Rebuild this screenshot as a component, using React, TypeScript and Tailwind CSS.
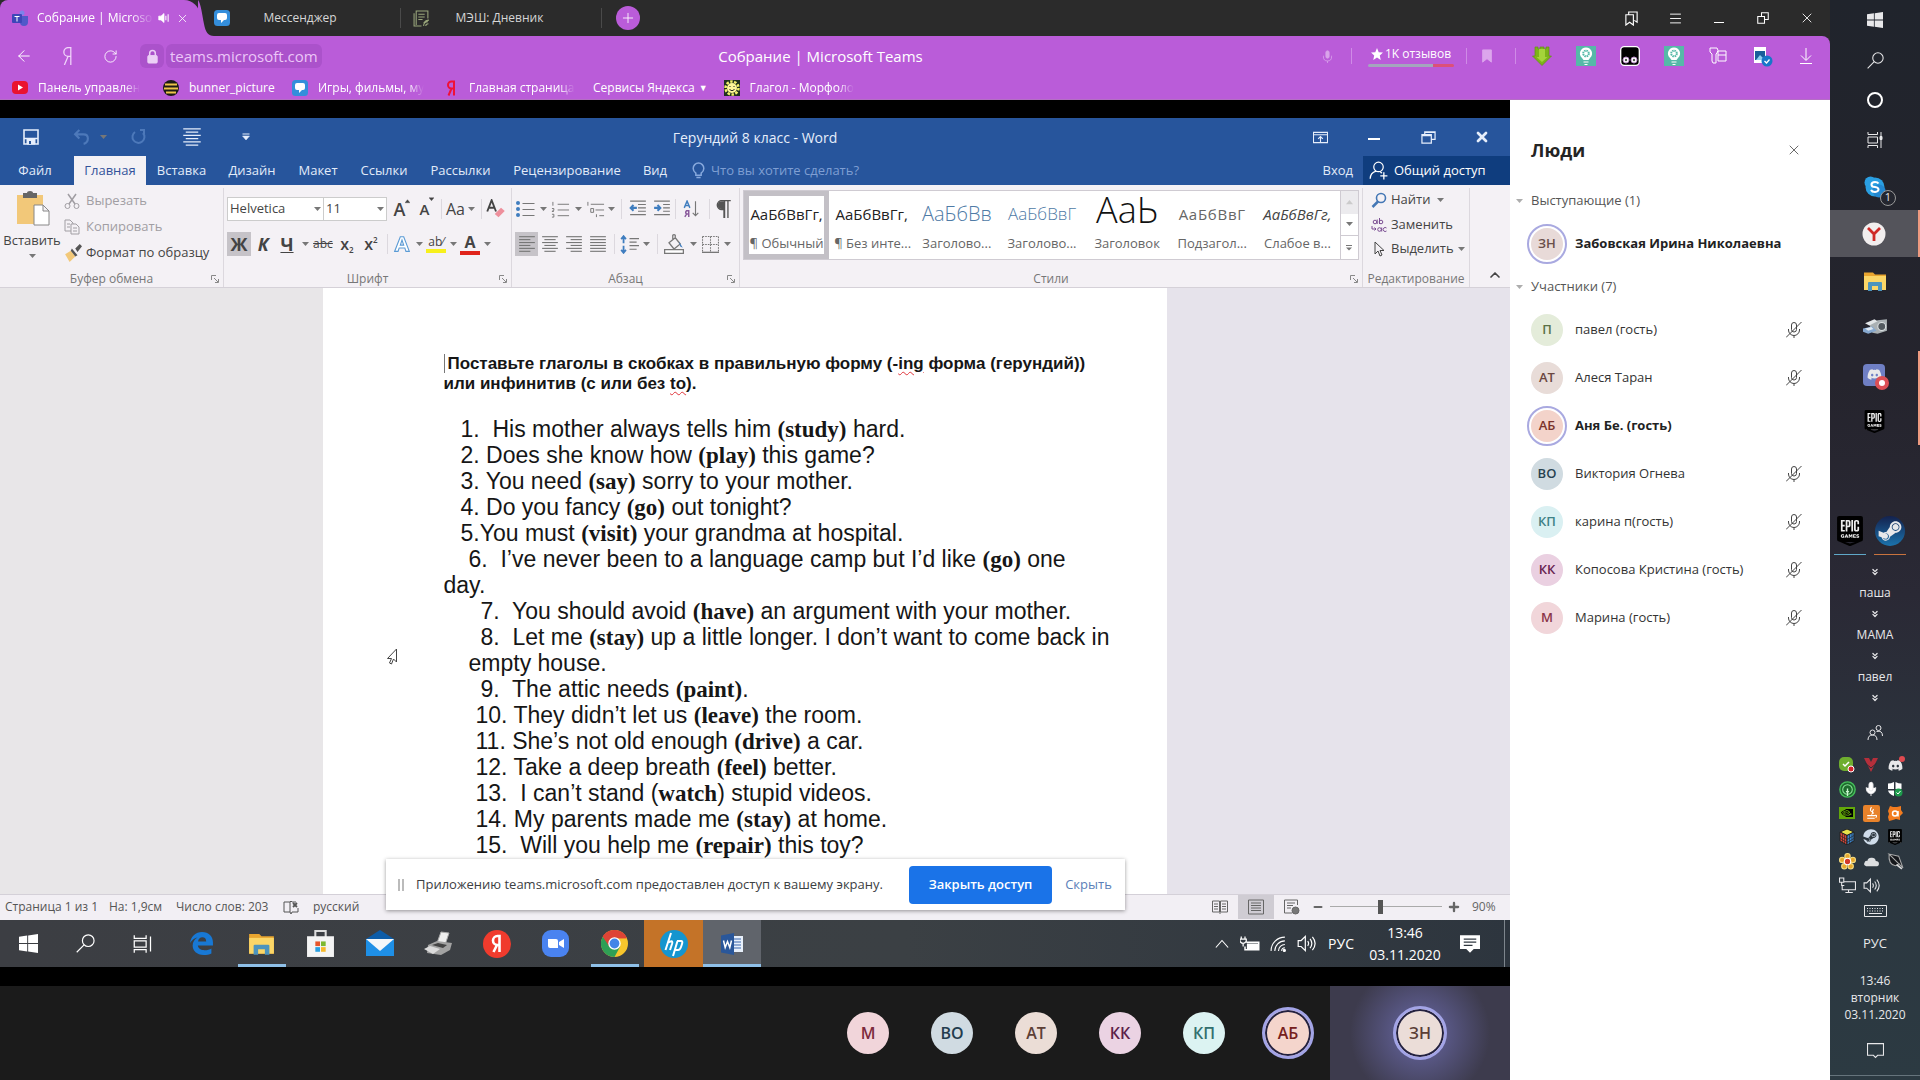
import React from "react";
import {
  ArrowLeft, Menu, X, Minus, Plus, RotateCw, Mic, ChevronUp, ChevronsDown,
} from "lucide-react";
import { FaSteam, FaDiscord, FaSteamSymbol } from "react-icons/fa";
import { SiEpicgames, SiNvidia } from "react-icons/si";

type Kids = { children?: React.ReactNode };

/* ---------- shared drawing helpers ---------- */
function Svg({ s = 16, vb = "0 0 16 16", className = "", children }: Kids & { s?: number; vb?: string; className?: string }) {
  return (
    <svg width={s} height={s} viewBox={vb} fill="none" stroke="currentColor" strokeWidth="1" className={`shrink-0 ${className}`} aria-hidden="true">
      {children}
    </svg>
  );
}
function Caret({ className = "w-3.5" }: { className?: string }) {
  return (
    <span className={`flex shrink-0 justify-center text-[#777] ${className}`}>
      <svg width="7" height="4" viewBox="0 0 7 4" aria-hidden="true"><path d="M0 0h7L3.5 4z" fill="currentColor" /></svg>
    </span>
  );
}
function Btn({ label, className = "", children }: Kids & { label: string; className?: string }) {
  return (
    <button type="button" aria-label={label} className={`flex shrink-0 items-center justify-center ${className}`}>
      {children}
    </button>
  );
}
function Lines({ rows, s = 16, className = "" }: { rows: [number, number][]; s?: number; className?: string }) {
  return (
    <Svg s={s} className={className}>
      {rows.map(([a, b], i) => <path key={i} d={`M${a} ${1.5 + i * (13 / (rows.length - 1))}H${b}`} />)}
    </Svg>
  );
}
function WinLogo({ s = 16 }: { s?: number }) {
  return (
    <Svg s={s}>
      <path d="M0 2.3 6.9 1.3v6.3H0zM7.7 1.2 16 0v7.6H7.7zM0 8.4h6.9v6.3L0 13.7zM7.7 8.4H16V16l-8.3-1.2z" fill="currentColor" stroke="none" />
    </Svg>
  );
}
function Glass({ s = 17 }: { s?: number }) {
  return <Svg s={s}><circle cx="10.3" cy="5.6" r="4.9" /><path d="M6.8 9.1.6 15.4" /></Svg>;
}
function TaskView() {
  return <Svg s={16}><path d="M1 0v2.500h9.500V0M1 16v-2.500h9.500V16M1 5h9.500v6H1zM14 0v4M14 8v8" /><path d="M13 4.500h2v3h-2z" fill="currentColor" /></Svg>;
}
function Folder({ s = 24 }: { s?: number }) {
  return (
    <Svg s={s} vb="0 0 24 24">
      <path d="M1 3.500h9l2 2h11V21H1z" fill="#e9a52f" stroke="none" />
      <path d="M1 7h22v14H1z" fill="#fbd667" stroke="none" />
      <path d="M5 22v-8q0-1 1-1h12q1 0 1 1v8h-4v-5H9v5z" fill="#4d94bd" stroke="none" />
    </Svg>
  );
}
function Chat() {
  return (
    <Svg s={16}>
      <rect width="16" height="16" rx="3.500" fill="#348edb" stroke="none" />
      <path d="M5 3h6q2 0 2 2v3q0 2-2 2h-1l-3 3v-3H5q-2 0-2-2V5q0-2 2-2z" fill="#fff" stroke="none" />
    </Svg>
  );
}
function Speaker({ s = 16 }: { s?: number }) {
  return <Svg s={s}><path d="M1 5.500h2.500L7 2v12L3.500 10.500H1zM9 6q1.500 2 0 4M11 4.200q3 3.800 0 7.600M13 2.500q4.500 5.500 0 11" /></Svg>;
}

/* ---------- browser chrome ---------- */
function TabStrip() {
  return (
    <div className="flex h-9 items-center bg-[#2b2b2b] text-[13px] text-[#d6d6d6]">
      <div className="relative flex h-9 w-[200px] items-center rounded-tl-lg rounded-tr-2xl bg-[#ba5cd9] pl-3 text-white">
        <svg width="20" height="36" viewBox="0 0 20 36" className="absolute -right-[18px] top-0" aria-hidden="true">
          <path d="M0 0C3 4 4 14 6 24c1.500 8 4 12 10 12H0z" fill="#ba5cd9" />
        </svg>
        <Svg s={17} vb="0 0 17 17">
          <circle cx="10" cy="3" r="2.500" fill="#7b83eb" stroke="none" />
          <path d="M8 6h8v6q0 4-4 4t-4-4z" fill="#5059c9" stroke="none" />
          <rect y="4" width="10" height="9" rx="1" fill="#3d46b8" stroke="none" />
          <path d="M2.500 6.500h5M5 6.500v5" stroke="#fff" />
        </Svg>
        <span className="ml-2 w-[117px] whitespace-nowrap text-[12px] [mask-image:linear-gradient(to_right,black_80%,transparent)]">Собрание | Microso</span>
        <Btn label="Отключить звук" className="ml-1"><Svg s={12}><path d="M1 5.500h3L8 2v12L4 10.500H1z" fill="currentColor" /><path d="M10.500 5v6M13.500 3v10" strokeWidth="1.400" /></Svg></Btn>
        <Btn label="Закрыть вкладку" className="ml-1.5"><X size={13} strokeWidth={1.500} /></Btn>
      </div>
      <button type="button" className="flex h-9 w-[200px] items-center pl-3.5 text-[12px]">
        <Chat /><span className="flex-1 pr-[30px] text-center">Мессенджер</span>
      </button>
      <span className="h-5 w-px bg-[#4a4a4a]" />
      <button type="button" className="flex h-9 w-[200px] items-center pl-3 text-[12px]">
        <Svg s={17} className="text-[#9aa77c]"><path d="M3 14V1h11v7M1 3v12h7M5 4h6M5 6.500h6M5 9h4M10 15q0-4 4-4M10 12.500q2-3 5-3M12 15q0-2 2.500-2" /></Svg>
        <span className="flex-1 pr-8 text-center">МЭШ: Дневник</span>
      </button>
      <span className="h-5 w-px bg-[#4a4a4a]" />
      <Btn label="Новая вкладка" className="ml-3.5 size-6 rounded-full bg-[#ba5cd9] text-white"><Plus size={16} strokeWidth={1.300} /></Btn>
      <div className="ml-auto flex pr-px text-white">
        <Btn label="Коллекции" className="w-11"><Svg s={15}><path d="M2 4h8v11l-4-3-4 3zM5 4V1h9v11l-3-2" strokeWidth="1.200" /></Svg></Btn>
        <Btn label="Меню" className="w-11"><Menu size={15} strokeWidth={1.500} /></Btn>
        <Btn label="Свернуть" className="w-11 pt-2"><span className="h-px w-2.5 bg-white" /></Btn>
        <Btn label="Окно" className="w-11"><Svg s={12}><path d="M1 6h9v9H1zM6 6V1h9v9h-5" strokeWidth="1.400" /></Svg></Btn>
        <Btn label="Закрыть" className="w-11"><X size={16} strokeWidth={1.300} /></Btn>
      </div>
    </div>
  );
}
function Bulb() {
  return (
    <Svg s={20} vb="0 0 20 20">
      <rect width="20" height="20" fill="#56b9a8" stroke="none" />
      <path d="M10 1.500a6 6 0 0 1 4 10.500l-1.500 2h-5L6 12A6 6 0 0 1 10 1.500z" fill="#fff" stroke="none" />
      <circle cx="10" cy="7.500" r="2.800" stroke="#56b9a8" strokeWidth="2" strokeDasharray="1.500 .7" />
      <path d="M7.500 16h5M8.500 18.500h3" stroke="#fff" strokeWidth="1.200" />
    </Svg>
  );
}
function AddressBar() {
  return (
    <div className="grid h-10 grid-cols-[19fr_auto_24fr] items-center text-white">
      <div className="flex items-center">
        <Btn label="Назад" className="w-12"><ArrowLeft size={18} strokeWidth={1.300} /></Btn>
        <Btn label="Яндекс" className="w-10"><Svg s={18} className="text-[#f1d6fa]"><path d="M10.500 16V.5H8.200a3.700 3.700 0 0 0 0 7.800h2.300M8 8.500 4.800 16" strokeWidth="1.100" /></Svg></Btn>
        <Btn label="Обновить" className="w-11"><RotateCw size={15} strokeWidth={1.400} /></Btn>
        <Btn label="Защищено" className="ml-2 h-6 w-6 rounded-md bg-[#ab52cb] text-[#ecd0f6]"><Svg s={15}><rect x="3" y="7" width="10" height="8" rx="1" fill="currentColor" /><path d="M5 7V4.500a3 3 0 0 1 6 0V7" strokeWidth="1.600" /></Svg></Btn>
        <input aria-label="Адрес" readOnly value="teams.microsoft.com" className="ml-0.5 h-6 w-[156px] rounded-md bg-[#ab52cb] pl-1 text-[15px] text-[#ecc6f8] outline-none" />
      </div>
      <h1 className="text-[15px]">Собрание | Microsoft Teams</h1>
      <div className="flex items-center justify-end">
        <Btn label="Голосовой ввод" className="w-6 text-[#d9a3ea]"><Svg s={13}><rect x="6" y="1" width="4" height="9" rx="2" fill="currentColor" /><path d="M3 7v1.500a5 5 0 0 0 10 0V7M8 13.500V16" /></Svg></Btn>
        <span className="ml-3 h-4 w-px bg-[#cf8be6]" />
        <button type="button" className="ml-4 w-[86px] text-[12px] leading-4">
          <span className="mb-0.5 flex items-center justify-center gap-0.5 whitespace-nowrap"><Svg s={12}><path d="m8 0 2.300 5.500 5.700.5-4.300 3.900L13 16l-5-3.200L3 16l1.300-6.100L0 6l5.700-.5z" fill="currentColor" stroke="none" /></Svg>1K отзывов</span>
          <span className="flex h-[3px] overflow-hidden rounded-full"><span className="w-3/4 bg-[#a3a6bd]" /><span className="flex-1 bg-[#dc5079]" /></span>
        </button>
        <span className="ml-3 h-4 w-px bg-[#cf8be6]" />
        <Btn label="В закладки" className="w-10 text-[#dca6ec]"><Svg s={14}><path d="M3 1h10v14l-5-4-5 4z" fill="currentColor" /></Svg></Btn>
        <span className="mr-1 ml-2 h-4 w-px bg-[#cf8be6]" />
        <Btn label="SaveFrom" className="w-11"><Svg s={20} vb="0 0 20 20"><path d="M3 1h3v2h2V1h4v2h2V1h3v9h2.500L10 19.500.5 10H3z" fill="#7db31a" stroke="#5f9412" strokeWidth=".7" /><path d="M7 3h6v8h2.500L10 16l-5.500-5H7z" fill="#a4d43a" stroke="none" /></Svg></Btn>
        <Btn label="Расширение" className="w-11"><Bulb /></Btn>
        <Btn label="Tampermonkey" className="w-11"><Svg s={20} vb="0 0 20 20"><rect x=".7" y=".7" width="18.600" height="18.600" rx="3.500" fill="#000" stroke="#fff" strokeWidth="1.300" /><circle cx="6" cy="14" r="3" fill="#fff" stroke="#b98cc8" /><circle cx="14" cy="14" r="3" fill="#fff" stroke="#b98cc8" /><circle cx="6" cy="14" r="1.200" fill="#555" stroke="none" /><circle cx="14" cy="14" r="1.200" fill="#555" stroke="none" /></Svg></Btn>
        <Btn label="Расширение 2" className="w-11"><Bulb /></Btn>
        <Btn label="Пароли" className="w-11"><Svg s={18} vb="0 0 18 18"><path d="M1 1h7q2 2 0 5L7 7v9H4l-1-2V7L1 5zM9 4h8v10H9zM9 8h8" /></Svg></Btn>
        <Btn label="Загрузки изображений" className="w-11"><Svg s={22} vb="0 0 22 22"><path d="M3 2h12v16H3z" fill="#fff" stroke="none" /><path d="M4 6h10v9H4z" fill="#1a5e9a" stroke="none" /><path d="m5 15 4-5 5 5z" fill="#8fd0f0" stroke="none" /><circle cx="16" cy="16" r="5.500" fill="#1877c9" stroke="none" /><path d="m13.500 16 2 2 3-3.500" stroke="#fff" strokeWidth="1.300" /></Svg></Btn>
        <Btn label="Загрузки" className="mr-0.5 w-11"><Svg s={16}><path d="M8 0v12M3 7.500 8 12.500l5-5M2 15.500h12" /></Svg></Btn>
      </div>
    </div>
  );
}
const marks: { icon: React.ReactNode; text: string; cls: string }[] = [
  { icon: <Svg s={16}><rect y="1" width="16" height="13" rx="4" fill="#ea1230" stroke="none" /><path d="m6 4.500 5 3-5 3z" fill="#fff" stroke="none" /></Svg>, text: "Панель управлен", cls: "w-[151px]" },
  { icon: <Svg s={16}><circle cx="8" cy="8" r="8" fill="#1c1a16" stroke="none" /><path d="M2 4.500h12M1 8.500h14M3 12.500h10" stroke="#eec24a" strokeWidth="2" /></Svg>, text: "bunner_picture", cls: "w-[129px]" },
  { icon: <Chat />, text: "Игры, фильмы, му", cls: "w-[151px]" },
  { icon: <Svg s={16}><path d="M11 15.500V1.500H8.500a3.500 3.500 0 0 0 0 7H11M8.500 8.500 5.500 15.500" stroke="#f01037" strokeWidth="2" /></Svg>, text: "Главная страница", cls: "w-[150px]" },
];
function Bookmarks() {
  return (
    <nav aria-label="Закладки" className="flex h-6 items-start border-b border-[#b56fc4] pl-3 text-[12px] leading-6 text-white">
      {marks.map((m, i) => (
        <a key={m.text} href="#" className={`flex h-6 shrink-0 items-center gap-2.5 ${m.cls}`}>
          {m.icon}
          <span className={`whitespace-nowrap ${i === 1 ? "" : "[mask-image:linear-gradient(to_right,black_85%,transparent)]"}`}>{m.text}</span>
        </a>
      ))}
      <button type="button" className="flex h-6 items-center whitespace-nowrap">Сервисы Яндекса<span className="ml-1 text-[9px]">▼</span></button>
      <a href="#" className="ml-4 flex h-6 items-center gap-2.5">
        <Svg s={16}><rect width="16" height="16" fill="#20301f" stroke="none" /><circle cx="8" cy="8" r="6.500" stroke="#f4f06a" strokeWidth="2.500" strokeDasharray="2.500 1.500" /><circle cx="8" cy="8" r="5" fill="#fff799" stroke="none" /><path d="M6 6v1M10 6v1M5.500 9.500q2.500 2.500 5 0" stroke="#222" /></Svg>
        <span className="whitespace-nowrap [mask-image:linear-gradient(to_right,black_85%,transparent)]">Глагол - Морфоло</span>
      </a>
    </nav>
  );
}

/* ---------- Word window ---------- */
function WordTitle() {
  return (
    <div className="grid h-[38px] grid-cols-[1fr_auto_1fr] items-center bg-[#27559c] text-[#e6eefb]">
      <div className="flex items-center pl-[23px]">
        <Btn label="Сохранить"><Svg s={16}><path d="M1 1h14v14H1zM1 9.500h14" strokeWidth="1.600" /><path d="M4 10h8v5H4z" fill="currentColor" /><path d="M6 12h2v3H6z" fill="#27559c" stroke="none" /></Svg></Btn>
        <Btn label="Отменить" className="ml-[34px] text-[#4d79ba]"><Svg s={17}><path d="M6 1 2 5l4 4M2 5h8q4 0 4 4t-4 5" strokeWidth="2" /></Svg><Caret className="ml-1.5 w-3.5" /></Btn>
        <Btn label="Вернуть" className="ml-5 text-[#4d79ba]"><Svg s={16}><path d="M10 1h4v4M5 3a6 6 0 1 0 8 1" strokeWidth="2" /></Svg></Btn>
        <Btn label="По центру" className="ml-9"><Lines s={20} rows={[[1, 15], [3, 13], [1, 15], [3, 13], [1, 15], [3, 13]]} /></Btn>
        <Btn label="Настройка панели" className="ml-10"><Svg s={8}><path d="M1 2h14" strokeWidth="2" /><path d="M1 6h14l-7 8z" fill="currentColor" /></Svg></Btn>
      </div>
      <h2 className="text-[14px]">Герундий 8 класс - Word</h2>
      <div className="flex justify-end pr-px">
        <Btn label="Параметры ленты" className="w-[54px]"><Svg s={15}><path d="M.5 2.500h15v11H.5zM.5 5h15M8 13V7M5.500 9.500 8 7l2.500 2.500" strokeWidth="1.200" /></Svg></Btn>
        <Btn label="Свернуть Word" className="w-[54px]"><span className="mt-1 h-0.5 w-3 bg-white" /></Btn>
        <Btn label="Восстановить Word" className="w-[54px]"><Svg s={15}><path d="M1 5h10v9H1zM4 5V2h11v8h-4M1 6h10M4 2.500h11" strokeWidth="1.300" /></Svg></Btn>
        <Btn label="Закрыть Word" className="w-[54px]"><X size={16} strokeWidth={4} /></Btn>
      </div>
    </div>
  );
}
const tabs: [string, string][] = [
  ["Файл", "w-[74px] pr-1"], ["Главная", "w-[72px]"], ["Вставка", "w-[71px]"], ["Дизайн", "w-[70px]"], ["Макет", "w-[62px]"],
  ["Ссылки", "w-[70px]"], ["Рассылки", "w-[83px]"], ["Рецензирование", "w-[130px]"], ["Вид", "w-[46px]"],
];
function WordTabs() {
  return (
    <div className="flex h-[29px] items-stretch bg-[#27559c] text-[13px] text-[#e2ebf9]">
      <div role="tablist" aria-label="Лента" className="flex">
        {tabs.map(([t, w], i) => (
          <button key={t} type="button" role="tab" aria-selected={i === 1} className={`${w} whitespace-nowrap text-center ${i === 1 ? "bg-[#f3f1f5] text-[#33539a]" : ""}`}>{t}</button>
        ))}
      </div>
      <label className="ml-3 flex items-center gap-1 text-[#87a9dd]">
        <Svg s={17}><path d="M5.500 10.500Q3 8.500 3 6a5 5 0 0 1 10 0q0 2.500-2.500 4.500v2h-5zM6 14.500h4" strokeWidth="1.400" /></Svg>
        <input aria-label="Поиск команды" placeholder="Что вы хотите сделать?" className="w-44 bg-transparent text-[13px] outline-none placeholder:text-[#7f9fd3]" />
      </label>
      <button type="button" className="ml-auto px-2.5">Вход</button>
      <button type="button" className="flex w-[147px] items-center gap-1.5 bg-[#0f3d7e] pl-1.5 text-white">
        <Svg s={19}><circle cx="8" cy="5" r="4" /><path d="M1 15q0-5 5-6.500M9.500 12.500h6M12.500 9.500v6M9.500 9.500 11 10" strokeWidth="1.100" /></Svg>
        Общий доступ
      </button>
    </div>
  );
}
function Launcher() {
  return <Btn label="Параметры группы" className="absolute bottom-1 right-1 text-[#888]"><Svg s={8} vb="0 0 8 8"><path d="M.5 5V.5H5M3 3l4 4M7.500 4v3.500H4" /></Svg></Btn>;
}
function Group({ label, className, launcher = true, children }: Kids & { label: string; className: string; launcher?: boolean }) {
  return (
    <section aria-label={label} className={`relative flex flex-col justify-between border-r border-[#dcd8de] ${className}`}>
      {children}
      <div className="text-center text-[12px] leading-4 text-[#777]">{label}</div>
      {launcher && <Launcher />}
    </section>
  );
}
function Sep({ className = "mx-1.5" }: { className?: string }) {
  return <span className={`h-5 w-px shrink-0 bg-[#dcd8de] ${className}`} />;
}
function Pick({ label, value, className }: { label: string; value: string; className: string }) {
  return (
    <span className={`relative flex h-6 items-center border border-[#ccc] bg-white ${className}`}>
      <select aria-label={label} className="h-full w-full appearance-none bg-transparent pl-0.5 text-[13px] outline-none"><option>{value}</option></select>
      <span className="pointer-events-none absolute right-0"><Caret className="w-3" /></span>
    </span>
  );
}
const styles: [string, string, string][] = [
  ["АаБбВвГг,", "¶ Обычный", "text-[15px] text-[#222]"],
  ["АаБбВвГг,", "¶ Без инте...", "text-[15px] text-[#222]"],
  ["АаБбВв", "Заголово...", "text-[20px] font-light text-[#4f7ba6]"],
  ["АаБбВвГ", "Заголово...", "text-[17px] font-light text-[#4f7ba6]"],
  ["АаЬ", "Заголовок", "pb-2 text-[36px] font-light text-[#111]"],
  ["АаБбВвГ", "Подзагол...", "text-[15px] text-[#666] tracking-wider"],
  ["АаБбВвГг,", "Слабое в...", "text-[15px] italic text-[#444]"],
];
const full: [number, number] = [1, 15];
const short: [number, number] = [1, 11];
function Ribbon() {
  return (
    <div className="flex h-[103px] overflow-hidden border-b border-[#d5d1d8] bg-[#f4f1f5] pt-[3px] text-[13px] text-[#444]">
      <Group label="Буфер обмена" className="w-[224px]">
        <div className="flex">
          <button type="button" className="flex w-[64px] flex-col items-center pt-0.5">
            <Svg s={36} vb="0 0 36 36"><path d="M3 5h26v29H3z" fill="#f2c879" stroke="none" /><path d="M9 3h4q0-2 3-2t3 2h4v5H9z" fill="#666" stroke="none" /><path d="M20 15h9l6 6v14H20zM29 15v6h6" fill="#fff" stroke="#888" /></Svg>
            <span className="mt-1 leading-5">Вставить</span><Caret className="mt-1 w-4" />
          </button>
          <div className="flex flex-1 flex-col pt-px">
            <button type="button" className="flex h-6 items-center gap-1.5 text-[#a19ea3]"><Svg s={16}><path d="M4 1l7 10M12 1 5 11" strokeWidth="1.500" /><circle cx="3.500" cy="13" r="2.500" /><circle cx="12.500" cy="13" r="2.500" /></Svg>Вырезать</button>
            <button type="button" className="flex h-7 items-center gap-1.5 text-[#a19ea3]"><Svg s={16}><path d="M7 12H1V1h5l3 3v1M3 5h3M3 8h3M7 5h5l3 3v7H7zM9 9h4M9 12h4" /></Svg>Копировать</button>
            <button type="button" className="flex h-6 items-center gap-1 whitespace-nowrap"><Svg s={18}><path d="m1 9 5-3 4 5-5 5z" fill="#f2c879" stroke="none" /><path d="m7 4 5 6-2 1-4-5zM10 4l4-4 2 2-4 5z" fill="#555" stroke="none" /></Svg>Формат по образцу</button>
          </div>
        </div>
      </Group>
      <Group label="Шрифт" className="w-[288px]">
        <div className="pl-[3px] pt-[9px]">
          <div className="flex h-6 items-center">
            <Pick label="Шрифт" value="Helvetica" className="w-[97px]" />
            <Pick label="Размер" value="11" className="w-[63px] border-l-0" />
            <Btn label="Увеличить шрифт" className="ml-1 w-[22px] items-start text-[18px] font-semibold leading-5">А<Svg s={5}><path d="M0 12 8 2l8 10z" fill="currentColor" /></Svg></Btn>
            <Btn label="Уменьшить шрифт" className="ml-1 w-5 items-start text-[15px] font-semibold leading-6">А<Svg s={5}><path d="M0 2h16L8 12z" fill="currentColor" /></Svg></Btn>
            <Sep className="mx-1" />
            <Btn label="Регистр" className="text-[16px]">Аа<Caret className="w-3" /></Btn>
            <Sep className="mx-1" />
            <Btn label="Очистить"><Svg s={20}><path d="M1 10 4.500 1 8 10M2.200 7h4.600" strokeWidth="1.500" /><path d="m7 12 5-5 3 2.500-5 5z" fill="#ee8f9c" stroke="none" /></Svg></Btn>
          </div>
          <div className="mt-[11px] flex h-6 items-center text-[18px] font-bold">
            <Btn label="Полужирный" className="h-6 w-6 bg-[#c6c3c8]">Ж</Btn>
            <Btn label="Курсив" className="w-6 italic">К</Btn>
            <Btn label="Подчёркнутый" className="w-6 underline">Ч</Btn><Caret className="w-3" />
            <Btn label="Зачёркнутый" className="w-6 text-[12px] font-normal line-through">abc</Btn>
            <Btn label="Подстрочный" className="w-6 text-[16px] font-semibold">x<span className="self-end text-[8px] leading-3">2</span></Btn>
            <Btn label="Надстрочный" className="w-6 text-[16px] font-semibold">x<span className="self-start text-[8px] leading-4">2</span></Btn>
            <Sep className="mx-1" />
            <Btn label="Эффекты" className="w-5"><Svg s={18}><path d="m1.500 14.500 5-13h3l5 13h-3l-1-3h-5l-1 3zM6.500 9h3L8 4.500z" stroke="#5b9bd5" fill="#fff" /></Svg></Btn><Caret />
            <Btn label="Выделение" className="w-5 flex-col text-[12px] font-normal leading-[14px]"><span>ab⁄</span><span className="h-1 w-5 bg-[#f7f01c]" /></Btn><Caret />
            <Btn label="Цвет текста" className="w-5 flex-col text-[16px] leading-[17px]"><span>А</span><span className="h-1 w-5 bg-[#e0241c]" /></Btn><Caret />
          </div>
        </div>
      </Group>
      <Group label="Абзац" className="w-[228px]">
        <div className="pl-[3px] pt-[9px] text-[#777]">
          <div className="flex h-6 items-center">
            <Btn label="Маркеры"><Svg s={20} vb="0 0 20 18"><g fill="#3f7dbf" stroke="none"><circle cx="3" cy="3" r="2" /><circle cx="3" cy="9" r="2" /><circle cx="3" cy="15" r="2" /></g><path d="M7.500 3.500h12M7.500 9.500h12M7.500 15.500h12" /></Svg></Btn><Caret className="w-4" />
            <Btn label="Нумерация"><Svg s={19} vb="0 0 20 18"><path d="M2 1v4M1 8h2v2l-2 1h2M1 14h2v3H1M7 3.500h12M7 9.500h12M7 15.500h12" /></Svg></Btn><Caret className="w-4" />
            <Btn label="Многоуровневый список"><Svg s={19} vb="0 0 20 18"><path d="M2 1v4M5 3.500h14M5 8h3v4H5zM10 9.500h9M11 14v3M14 15.500h5" /></Svg></Btn><Caret className="w-3" />
            <Sep className="mx-1" />
            <Btn label="Уменьшить отступ" className="w-6"><Svg s={18}><path d="M1 1h14M8 4h7M8 7h7M8 10h7M1 13h14" /><path d="M7 7H2M4 4.500 1.500 7 4 9.500" stroke="#3f7dbf" strokeWidth="1.800" /></Svg></Btn>
            <Btn label="Увеличить отступ" className="w-6"><Svg s={18}><path d="M1 1h14M9 4h6M9 7h6M9 10h6M1 13h14" /><path d="M1 7h5M4 4.500 6.500 7 4 9.500" stroke="#3f7dbf" strokeWidth="1.800" /></Svg></Btn>
            <Sep className="ml-px" />
            <Btn label="Сортировка" className="ml-px w-7"><Svg s={18}><path d="m2 7 2.500-6L7 7M3 5h3" stroke="#3f7dbf" strokeWidth="1.300" /><path d="M6 15V9.500H4q-1.500 1.500 0 3h2M4 12.500 2.500 15" stroke="#8a5a9c" strokeWidth="1.300" /><path d="M12 1v13M9.500 11.500 12 14l2.500-2.500" /></Svg></Btn>
            <Sep className="mx-1" />
            <Btn label="Знаки" className="w-5"><Svg s={18}><path d="M14 .5H6a4 4 0 0 0 0 8h2V16M8.500 1v15M11.500 1v15" stroke="#555" strokeWidth="1.200" /><path d="M8 1H6a3.500 3.500 0 0 0 0 7h2z" fill="#555" stroke="none" /></Svg></Btn>
          </div>
          <div className="mt-[11px] flex h-6 items-center">
            <Btn label="По левому краю" className="h-6 w-[23px] bg-[#c6c3c8]"><Lines s={18} rows={[full, short, full, short, full, short]} /></Btn>
            <Btn label="По центру абзац" className="w-6"><Lines s={18} rows={[full, [3, 13], full, [3, 13], full, [3, 13]]} /></Btn>
            <Btn label="По правому краю" className="w-6"><Lines s={18} rows={[full, [5, 15], full, [5, 15], full, [5, 15]]} /></Btn>
            <Btn label="По ширине" className="w-6"><Lines s={18} rows={[full, full, full, full, full, full]} /></Btn>
            <Sep className="mx-1" />
            <Btn label="Интервал" className="w-5"><Svg s={19}><path d="M3 1v6M3 9v6M1 3.500 3 1l2 2.500M1 12.500 3 15l2-2.500" stroke="#3f7dbf" strokeWidth="1.500" /><path d="M8 3h8M8 6h6M8 9h8M8 12h6" /></Svg></Btn><Caret />
            <Sep className="mx-1" />
            <Btn label="Заливка" className="w-6"><Svg s={20}><path d="m4 7 5-4 4 5-5 4zM9 3V1q-1-1-2 0v3" /><path d="m12 6 3 5-2-1z" fill="#3f7dbf" stroke="none" /><path d="M.5 12.500h15v3H.5z" fill="#fff" /></Svg></Btn><Caret />
            <Btn label="Границы" className="w-5"><Svg s={17}><path d="M.5.5h15v15M.5.5v15M8 .5v15M.5 8h15" strokeDasharray="1.500 1" /><path d="M0 15.500h16" strokeWidth="1.500" /></Svg></Btn><Caret />
          </div>
        </div>
      </Group>
      <Group label="Стили" className="flex-1">
        <div className="mx-[3px] mt-0.5 flex h-[70px] border border-[#cfcbd2] bg-white">
          {styles.map(([a, b, c], i) => (
            <button key={i} type="button" className={`flex min-w-0 flex-1 flex-col text-center ${i === 0 ? "border-[5px] border-[#c3c0c6]" : "border-[5px] border-transparent"}`}>
              <span className={`flex h-9 w-full items-center justify-center whitespace-nowrap leading-9 ${c}`}>{a}</span>
              <span className="w-full whitespace-nowrap text-[13px] leading-[22px] text-[#666]">{b}</span>
            </button>
          ))}
          <div className="grid w-[18px] grid-rows-3 border-l border-[#cfcbd2]">
            <Btn label="Вверх" className="bg-[#e1dee4] opacity-60"><Svg s={7}><path d="M0 12 8 2l8 10z" fill="#aaa" stroke="none" /></Svg></Btn>
            <Btn label="Вниз" className="border-b border-[#cfcbd2]"><Caret className="w-3" /></Btn>
            <Btn label="Ещё стили"><Svg s={8} className="text-[#777]"><path d="M2 3h12" strokeWidth="2" /><path d="M2 7h12l-6 6z" fill="currentColor" stroke="none" /></Svg></Btn>
          </div>
        </div>
      </Group>
      <Group label="Редактирование" className="w-[107px]" launcher={false}>
        <div className="whitespace-nowrap pl-2">
          <button type="button" className="flex h-6 items-center gap-1"><Svg s={16} className="text-[#4477b5]"><circle cx="10" cy="6" r="4.500" strokeWidth="1.600" /><path d="M7 9.500 1.500 15" strokeWidth="2.500" /></Svg>Найти<Caret className="w-3" /></button>
          <button type="button" className="flex h-[26px] items-center gap-1"><Svg s={16} className="text-[#7a4d92]"><circle cx="4" cy="5" r="1.800" /><path d="M6.200 2.500v4.500M8.500 1v6M1 9v3h4M3.500 10.500 5 12l-1.500 1.500" /><circle cx="10" cy="5" r="1.800" /><circle cx="8.500" cy="12.500" r="1.800" /><path d="M10.700 10.500v4M15.500 11a2 2 0 1 0 0 3" /></Svg>Заменить</button>
          <button type="button" className="flex h-[22px] items-center gap-1"><Svg s={16}><path d="M4 1v12l3-3 2 5 2-1-2-4.500h4z" /></Svg>Выделить<Caret className="w-2" /></button>
        </div>
      </Group>
      <div className="flex w-10 items-end justify-end pb-1 pr-[7px]"><Btn label="Свернуть ленту"><ChevronUp size={16} strokeWidth={2.500} /></Btn></div>
    </div>
  );
}
const B = ({ children }: Kids) => <b className="font-['Liberation_Serif',serif] leading-none">{children}</b>;
function Page() {
  const rows: [string, React.ReactNode][] = [
    ["pl-[17px]", <>1.{"  "}His mother always tells him <B>(study)</B> hard.</>],
    ["pl-[17px]", <>2. Does she know how <B>(play)</B> this game?</>],
    ["pl-[17px]", <>3. You need <B>(say)</B> sorry to your mother.</>],
    ["pl-[17px]", <>4. Do you fancy <B>(go)</B> out tonight?</>],
    ["pl-[17px]", <>5.You must <B>(visit)</B> your grandma at hospital.</>],
    ["pl-[25px]", <>6.{"  "}I’ve never been to a language camp but I’d like <B>(go)</B> one</>],
    ["pl-0", <>day.</>],
    ["pl-[37px]", <>7.{"  "}You should avoid <B>(have)</B> an argument with your mother.</>],
    ["pl-[37px]", <>8.{"  "}Let me <B>(stay)</B> up a little longer. I don’t want to come back in</>],
    ["pl-[25px]", <>empty house.</>],
    ["pl-[37px]", <>9.{"  "}The attic needs <B>(paint)</B>.</>],
    ["pl-8", <>10. They didn’t let us <B>(leave)</B> the room.</>],
    ["pl-8", <>11. She’s not old enough <B>(drive)</B> a car.</>],
    ["pl-8", <>12. Take a deep breath <B>(feel)</B> better.</>],
    ["pl-8", <>13.{"  "}I can’t stand (<B>watch</B>) stupid videos.</>],
    ["pl-8", <>14. My parents made me <B>(stay)</B> at home.</>],
    ["pl-8", <>15.{"  "}Will you help me <B>(repair)</B> this toy?</>],
  ];
  return (
    <article className="w-[844px] whitespace-pre bg-white pl-[121px] pt-[66px] font-['Liberation_Sans',Arial,sans-serif] text-[#161616]">
      <p className="text-[17px] font-bold leading-5"><span className="border-l border-[#777] pl-[3px]">Поставьте</span> глаголы в скобках в правильную форму (-<span className="underline decoration-[#e0353b] decoration-wavy decoration-1 underline-offset-2">ing</span> форма (герундий))<br />или инфинитив (с или без <span className="underline decoration-[#e0353b] decoration-wavy decoration-1 underline-offset-2">to</span>).</p>
      <div className="mt-[22px] text-[23px] leading-[26px]">
        {rows.map(([c, t], i) => <p key={i} className={c}>{t}</p>)}
      </div>
    </article>
  );
}
function ShareNotice() {
  return (
    <div role="status" className="absolute bottom-2.5 left-[386px] flex h-[51px] w-[739px] items-center bg-white pl-3 text-[13px] text-[#3c4043] shadow-[0_1px_4px_rgba(0,0,0,0.4)]">
      <span className="h-3 w-1.5 border-x-2 border-[#bbb]" />
      <span className="ml-3 flex-1 whitespace-nowrap">Приложению teams.microsoft.com предоставлен доступ к вашему экрану.</span>
      <button type="button" className="h-[38px] w-[143px] rounded bg-[#1a73e8] font-semibold text-white">Закрыть доступ</button>
      <button type="button" className="w-[73px] text-[#5b7fb8]">Скрыть</button>
    </div>
  );
}
function StatusBar() {
  return (
    <div className="flex h-[26px] items-center border-t border-[#d4d0d8] bg-[#f2eff4] pb-0.5 pl-[5px] text-[12px] text-[#555]">
      <span className="w-[104px]">Страница 1 из 1</span><span className="w-[67px]">На: 1,9см</span><span className="w-[107px]">Число слов: 203</span>
      <Svg s={16}><path d="M7 13V3H1v10h6l1 2 1-2h6V9M7 3l1-1 1 1h4" /><path d="m10 4 4 4M14 4l-4 4" strokeWidth="1.800" /></Svg>
      <span className="ml-3.5">русский</span>
      <div className="ml-auto flex h-full items-center text-[#666]">
        <Btn label="Режим чтения" className="w-9"><Svg s={16}><path d="M.5 2h7v11h-7zM8.500 2h7v11h-7zM2 5h4M2 7.500h4M2 10h4M10 5h4M10 7.500h4M10 10h4M8 13v2" /></Svg></Btn>
        <Btn label="Разметка страницы" className="h-6 w-9 bg-[#cfccd3]"><Svg s={16}><path d="M.5 1h15v14H.5zM3 4h10M3 6.500h10M3 9h10M3 11.500h10" /></Svg></Btn>
        <Btn label="Веб-документ" className="w-9"><Svg s={16}><path d="M8 14H.5V1h13v5M3 4h8M3 6.500h6M3 9h4" /><circle cx="11.500" cy="11.500" r="3.500" fill="#777" /></Svg></Btn>
        <Btn label="Уменьшить масштаб" className="w-4"><Minus size={12} strokeWidth={4} /></Btn>
        <input type="range" aria-label="Масштаб" defaultValue={45} className="mx-1 h-4 w-28 appearance-none bg-[linear-gradient(#aaa,#aaa)] bg-[length:100%_1px] bg-center bg-no-repeat [&::-webkit-slider-thumb]:h-3.5 [&::-webkit-slider-thumb]:w-[5px] [&::-webkit-slider-thumb]:appearance-none [&::-webkit-slider-thumb]:bg-[#555]" />
        <Btn label="Увеличить масштаб" className="w-4"><Plus size={14} strokeWidth={4} /></Btn>
        <span className="w-12 pl-2.5">90%</span>
      </div>
    </div>
  );
}
const apps: { n: string; i: React.ReactNode; c: string }[] = [
  { n: "Пуск", i: <WinLogo s={19} />, c: "w-[57px]" },
  { n: "Поиск", i: <Glass s={19} />, c: "w-[57px]" },
  { n: "Представление задач", i: <Svg s={20}><path d="M1 1v2.500h9.500V1M1 15v-2.500h9.500V15M1 5.500h9.500v5H1zM14 2v12" /></Svg>, c: "w-[57px]" },
  { n: "Edge", i: <Svg s={25} vb="0 0 24 24"><path d="M1 11.500C2 5 6.500 1 12.500 1 19 1 23 5.500 23 11v3H8.500c.3 3 3 4.500 6.500 4.500 2.500 0 5-.7 6.500-1.700v4.700C19.500 22.800 17 23 14 23 7.500 23 3.500 19 3.500 14c0-3.500 2-6.500 4.800-7.800C5.500 6.500 2.700 8.500 1 11.500zM8.700 10h7.800c0-2.500-1.300-4-3.700-4-2.300 0-3.800 1.700-4.100 4z" fill="#1878d4" stroke="none" /></Svg>, c: "w-[61px]" },
  { n: "Проводник", i: <Folder s={27} />, c: "w-[59px]" },
  { n: "Магазин", i: <Svg s={29} vb="0 0 28 28"><path d="M9 8V2h10v6" stroke="#ddd" strokeWidth="2" /><path d="M1 7h26v20H1z" fill="#f4f4f4" stroke="none" /><path d="M9 12h4.500v4.500H9z" fill="#e8562a" stroke="none" /><path d="M14.500 12H19v4.500h-4.500z" fill="#7cb82f" stroke="none" /><path d="M9 17.500h4.500V22H9z" fill="#2a9fe0" stroke="none" /><path d="M14.500 17.500H19V22h-4.500z" fill="#f6b92b" stroke="none" /></Svg>, c: "w-[59px]" },
  { n: "Почта", i: <Svg s={28} vb="0 0 28 28"><path d="M0 9 14 0l14 9v17H0z" fill="#0c5ca8" stroke="none" /><path d="M0 9h28v17H0z" fill="#1e8fe6" stroke="none" /><path d="M0 9h28L14 21z" fill="#f2f6fa" stroke="none" /></Svg>, c: "w-[59px]" },
  { n: "Принтер", i: <Svg s={28} vb="0 0 28 28"><path d="m13 13 4-11 8 1-4 12z" fill="#eee" stroke="#aaa" /><path d="m4 15 9-4 15 2-2 7-9 5-14-2z" fill="#a3a3a3" stroke="none" /><path d="m8 15 6-2 9 2-4 3z" fill="#444" stroke="none" /><path d="m0 19 6-3 10 3-7 5z" fill="#dcdcdc" stroke="none" /></Svg>, c: "w-[58px]" },
  { n: "Яндекс", i: <Svg s={28} vb="0 0 28 28"><circle cx="14" cy="14" r="14" fill="#f03b2d" stroke="none" /><path d="M16.500 22V6h-2a4.300 4.300 0 0 0 0 9h2M14 15l-3.500 7" stroke="#fff" strokeWidth="2.600" /></Svg>, c: "w-[59px]" },
  { n: "Zoom", i: <Svg s={27} vb="0 0 27 27"><rect width="27" height="27" rx="9" fill="#4a83f0" stroke="none" /><path d="M6 9h8q2 0 2 2v7H8q-2 0-2-2zM17 12l5-3v9l-5-3z" fill="#fff" stroke="none" /></Svg>, c: "w-[59px]" },
  { n: "Chrome", i: <Svg s={27} vb="0 0 26 26"><circle cx="13" cy="13" r="13" fill="#f7c52c" stroke="none" /><path d="M13 13 1.700 6.500a13 13 0 0 1 22.600 0L25 8H13z" fill="#dd4436" stroke="none" /><path d="M1.700 6.500A13 13 0 0 0 13 26l5.500-10L13 13z" fill="#2f9f55" stroke="none" /><path d="M1.700 6.500 8 16l5-8h11L23 4H3z" fill="#dd4436" stroke="none" /><circle cx="13" cy="13" r="6" fill="#fff" stroke="none" /><circle cx="13" cy="13" r="4.700" fill="#4285e8" stroke="none" /></Svg>, c: "w-[59px]" },
  { n: "HP", i: <Svg s={28} vb="0 0 28 28"><circle cx="14" cy="14" r="14" fill="#1495cf" stroke="none" /><path d="M11 3 5.500 20M7.500 13q6-4 4.500 1l-2 6M17.500 11 13 26M17 11h4q2 0 1 3l-1 3q-1 3-3 3h-3" stroke="#fff" strokeWidth="2" /></Svg>, c: "w-[59px] bg-[#c47328]" },
  { n: "Word", i: <Svg s={24} vb="0 0 24 24"><path d="M12 4h11v16H12z" fill="#e8f0fb" stroke="none" /><path d="M14 7h7M14 10h7M14 13h7M14 16h7" stroke="#3a66ad" /><path d="M1 3.500 14 1v22L1 20.500z" fill="#2a579a" stroke="none" /><path d="m3.500 8.500 1.700 7 2.300-6 2.300 6 1.700-7" stroke="#fff" strokeWidth="1.500" /></Svg>, c: "w-[58px] bg-[#60646b]" },
];
const running = ["Проводник", "Chrome", "Word"];
function SharedTaskbar() {
  return (
    <div className="flex h-[47px] items-stretch bg-[linear-gradient(90deg,#3c3e43,#3b4044_60%,#2d353e)] text-white">
      {apps.map((a) => (
        <Btn key={a.n} label={a.n} className={`relative ${a.c}`}>
          {a.i}
          {running.includes(a.n) && <span className={`absolute bottom-0 h-[3px] bg-[#8fc0e8] ${a.n === "Word" ? "w-full" : "w-12"}`} />}
        </Btn>
      ))}
      <div className="ml-auto flex items-center">
        <Btn label="Скрытые значки" className="w-7"><Svg s={14}><path d="m1 12 7-8 7 8" strokeWidth="1.300" /></Svg></Btn>
        <Svg s={20} className="ml-1"><path d="M5 6.500h10v6H4V10" strokeWidth="1.200" /><path d="M6 8h8v3.500H6z" fill="currentColor" /><path d="M0 4h5v2q-2.500 3-5 0zM1 4V2M4 4V2M2.500 8v2" /></Svg>
        <Svg s={17} className="ml-2.5"><path d="M1 15A13 13 0 0 1 14 2M4.500 15A9.500 9.500 0 0 1 14 5.500M8 15a6 6 0 0 1 6-6M11 15a3 3 0 0 1 3-3" /><circle cx="13.500" cy="14.500" r="1" fill="currentColor" /></Svg>
        <span className="ml-2.5"><Speaker s={19} /></span>
        <span className="ml-3 text-[14px]">РУС</span>
        <time className="ml-3.5 w-[74px] text-center text-[14px] leading-[22px]">13:46<br />03.11.2020</time>
        <Btn label="Уведомления" className="ml-[18px]"><Svg s={20}><path d="M0 1h16v11H11l-3 3-3-3H0z" fill="currentColor" stroke="none" /><path d="M3 4h10M3 6.500h10M3 9h7" stroke="#303840" /></Svg></Btn>
        <span className="ml-6 mr-[5px] h-full w-px bg-[#7d858c]" />
      </div>
    </div>
  );
}
function Stage() {
  const ppl: [string, string][] = [
    ["М", "bg-[#f1d5da] text-[#7c2b3d]"], ["ВО", "bg-[#d0dbe2] text-[#233c4e]"], ["АТ", "bg-[#ebddd6] text-[#5d4036]"],
    ["КК", "bg-[#ebd3e3] text-[#5d1f4a]"], ["КП", "bg-[#dcf3f2] text-[#33706f]"],
  ];
  return (
    <div className="flex flex-1 items-stretch bg-[#1b1b1b] text-[16px] font-semibold">
      <div className="flex flex-1 items-center justify-end gap-[42px] pr-4">
        {ppl.map(([t, c]) => <span key={t} className={`flex size-[42px] items-center justify-center rounded-full ${c}`}>{t}</span>)}
        <span className="-ml-[5px] flex size-[52px] items-center justify-center rounded-full border-[3px] border-[#a3a4e6] bg-[#f4d5cc] text-[#76201c] shadow-[inset_0_0_0_2px_#23213f]">АБ</span>
      </div>
      <div className="flex w-[180px] items-center justify-center bg-[radial-gradient(circle_at_center,#5c5b8c_20px,#3d3b4d_70px)]">
        <span className="flex size-[54px] items-center justify-center rounded-full border-[3px] border-[#a3a4e6] bg-[#ebddd8] text-[#5a3d36] shadow-[inset_0_0_0_2px_#23213f]">ЗН</span>
      </div>
    </div>
  );
}

/* ---------- participants panel ---------- */
function Person({ ini, name, c, talk = false, muted = true }: { ini: string; name: string; c: string; talk?: boolean; muted?: boolean }) {
  return (
    <li className="flex h-12 items-center">
      <span className={`flex size-10 items-center justify-center rounded-full border-2 ${talk ? "border-[#a9a9e0]" : "border-transparent"}`}>
        <span className={`flex size-8 items-center justify-center rounded-full text-[13px] font-semibold ${c}`}>{ini}</span>
      </span>
      <span className={`ml-2 flex-1 whitespace-nowrap text-[13px] ${talk ? "font-bold text-[#222]" : "text-[#333]"}`}>{name}</span>
      {muted && (
        <Btn label={`Микрофон выключен: ${name}`} className="text-[#444]"><Svg s={16}><rect x="5.500" y=".5" width="5" height="9.500" rx="2.500" /><path d="M2.500 7v1a5.500 5.500 0 0 0 11 0V7M8 13.500V16M0 15.500 15.500 0" /></Svg></Btn>
      )}
    </li>
  );
}
function SectionHead({ children }: Kids) {
  return <button type="button" className="-ml-4 flex h-[38px] items-center gap-2 text-[13px] text-[#555]"><Caret className="w-2 opacity-60" />{children}</button>;
}
function People() {
  return (
    <aside className="w-80 bg-white pl-[21px] pr-7">
      <div className="flex h-[100px] items-center justify-between"><h2 className="text-[18px] font-bold text-[#242424]">Люди</h2><Btn label="Закрыть панель" className="text-[#444]"><X size={16} strokeWidth={1.200} /></Btn></div>
      <div className="-mt-[18px]"><SectionHead>Выступающие (1)</SectionHead></div>
      <ul className="-ml-1"><Person ini="ЗН" name="Забовская Ирина Николаевна" c="bg-[#e8dad8] text-[#6a4f4b]" talk muted={false} /></ul>
      <SectionHead>Участники (7)</SectionHead>
      <ul className="-ml-1">
        <Person ini="П" name="павел (гость)" c="bg-[#e4ecda] text-[#5b7247]" />
        <Person ini="АТ" name="Алеся Таран" c="bg-[#e8dcd8] text-[#6b4640]" />
        <Person ini="АБ" name="Аня Бе. (гость)" c="bg-[#f3d3ca] text-[#7b332c]" talk muted={false} />
        <Person ini="ВО" name="Виктория Огнева" c="bg-[#d0dbe1] text-[#28424f]" />
        <Person ini="КП" name="карина п(гость)" c="bg-[#daf0f2] text-[#3e8286]" />
        <Person ini="КК" name="Копосова Кристина (гость)" c="bg-[#ead0e1] text-[#672350]" />
        <Person ini="М" name="Марина (гость)" c="bg-[#f1d6da] text-[#8a3448]" />
      </ul>
    </aside>
  );
}

/* ---------- host taskbar ---------- */
function Epic({ s }: { s: number }) {
  return (
    <span className="relative flex shrink-0 items-center justify-center text-black">
      <span className="absolute inset-[14%] bg-[#eee]" />
      <SiEpicgames size={s} className="relative" />
    </span>
  );
}
function HostTaskbar() {
  const mark = "border-r-2 border-[#ee9a80]";
  const side: { n: string; i: React.ReactNode; c: string }[] = [
    { n: "Skype", c: "", i: <span className="relative"><Svg s={22} vb="0 0 22 22"><circle cx="11" cy="11" r="9.500" fill="#2a9fe2" stroke="none" /><circle cx="6.500" cy="6.500" r="6" fill="#2a9fe2" stroke="none" /><circle cx="15" cy="15" r="6.500" fill="#2387d0" stroke="none" /><path d="M14.500 7.500q-1-1.500-3.500-1.500-3.500 0-3.500 2.500T11 11q3.500.5 3.500 2.500T11 16q-3 0-4-2" stroke="#fff" strokeWidth="2" /></Svg><span className="absolute -bottom-2 -right-2.5 flex size-4 items-center justify-center rounded-full border border-[#999] bg-[#24262f] text-[11px]">1</span></span> },
    { n: "Яндекс.Браузер", c: `bg-[#54545b] ${mark}`, i: <Svg s={24} vb="0 0 24 24"><circle cx="12" cy="12" r="11.500" fill="#f1eeee" stroke="none" /><path d="M6 6l6 6 6-6M12 11.500V19" stroke="#cf2a27" strokeWidth="2.800" /></Svg> },
    { n: "Проводник Windows", c: "", i: <Folder s={24} /> },
    { n: "Камера", c: "", i: <Svg s={25} vb="0 0 24 24"><path d="m6 9 8-4 9-1v11l-9 3-5-1z" fill="#a9b0b3" stroke="none" /><circle cx="18" cy="11" r="3.800" fill="#535a60" stroke="#dde2e4" /><path d="m2 8 9-4 3 2-8 4z" fill="#e2e6e8" stroke="none" /><path d="m0 13 9-2 4 4-8 3-5-2z" fill="#86a8cf" stroke="none" /><path d="m2 13 6-1.500 2 2-5 1.500z" fill="#dfe9f3" stroke="none" /></Svg> },
    { n: "Discord", c: mark, i: <span className="relative flex size-[22px] items-center justify-center rounded bg-[#6f7fc4]"><FaDiscord size={15} /><span className="absolute -bottom-1 -right-1 size-[14px] rounded-full border-4 border-[#dc4f55] bg-white" /></span> },
    { n: "Epic Games", c: mark, i: <Epic s={23} /> },
  ];
  const dots: React.ReactNode[] = [
    <Svg s={16}><rect width="14" height="14" rx="5" fill="#6fae2f" stroke="none" /><path d="m4 7 2 2 4-4" stroke="#fff" strokeWidth="1.500" /><circle cx="12" cy="12" r="3" fill="#d3222a" stroke="#fff" /></Svg>,
    <Svg s={16}><path d="M1 1h5l2 4 2-4h5l-7 14z" fill="#b52f3b" stroke="none" /><path d="m2 6 6 5 6-5" stroke="#2a2c35" /></Svg>,
    <span className="relative"><FaDiscord size={15} /><span className="absolute -right-0.5 -top-0.5 size-1.5 rounded-full bg-[#e04a50]" /></span>,
    <Svg s={17}><circle cx="8" cy="8" r="7.200" fill="#1d6c2d" stroke="#45c05a" strokeWidth="1.300" /><circle cx="8" cy="8" r="4.500" stroke="#8ee49a" /><path d="M8 7v7M6.500 10h3" stroke="#c8f5ce" strokeWidth="1.300" /></Svg>,
    <Mic size={16} fill="white" strokeWidth={1.500} />,
    <Svg s={16}><path d="M7 1Q4 2.500 1 2.500V8h6zM8.500 1q3 1.500 6 1.500V8h-6zM1 9.500h6V15q-5-2-6-5.500z" fill="#fff" stroke="none" /><circle cx="11.500" cy="11.500" r="4" fill="#1d9b4c" stroke="none" /><path d="m9.500 11.500 1.500 1.500 2.500-3" stroke="#fff" /></Svg>,
    <span className="flex h-3 w-4 items-center justify-center bg-[#63a70a] text-black"><SiNvidia size={12} /></span>,
    <Svg s={17}><rect width="16" height="16" rx="2" fill="#e8822a" stroke="none" /><path d="M8 2q-2 3 0 4t0 3M10 4q-2 2 0 4M4 10h7M4 12.500h7M11 10q3-1 1 2" stroke="#fff" /></Svg>,
    <Svg s={16}><path d="m3 1 3 1h4l4-1v4l2 3-3 3v4l-4-1-3 1-4 1-1-4 1-3-1-3z" fill="#f37c1f" stroke="none" /><circle cx="8" cy="8.500" r="2.500" stroke="#fff" strokeWidth="1.500" /><path d="M11 6v5.500" stroke="#fff" strokeWidth="1.500" /></Svg>,
    <Svg s={16}><path d="m8 0 7 3-7 3.500L1 3z" fill="#e8e24a" stroke="#222" /><path d="m1 3 7 3.500V16l-7-4z" fill="#d9473a" stroke="#222" /><path d="m15 3-7 3.500V16l7-4z" fill="#3b83c9" stroke="#222" /><path d="m3.500 4.500v9M5.500 5.500v9M1 6.500l7 4 7-4M1 9.500l7 4 7-4M10.500 5.500v9M13 4.500v9" stroke="#222" strokeWidth=".6" /></Svg>,
    <FaSteam size={16} color="#cfdcea" />,
    <Epic s={16} />,
    <Svg s={17}><g fill="#e8a82c" stroke="#f6dd82"><circle cx="8" cy="3" r="2.500" /><circle cx="13" cy="6.500" r="2.500" /><circle cx="11" cy="12.500" r="2.500" /><circle cx="5" cy="12.500" r="2.500" /><circle cx="3" cy="6.500" r="2.500" /></g><circle cx="8" cy="8" r="3" fill="#d33a2a" stroke="#fff" /></Svg>,
    <Svg s={17}><path d="M3 12.500q-3-1-1.500-3.500Q2 7 4 7.500 5 4 8.500 4.500q3 0 3.500 3 3 0 3 2.500t-3 2.500z" fill="#dcdee0" stroke="none" /></Svg>,
    <Svg s={17}><path d="M2 1 15 14l-4-11zM2 1q-1 10 6 11l4-2" fill="#15171b" stroke="#aaa" /><path d="m9 11 5 4" stroke="#ddd" strokeWidth="1.500" /></Svg>,
    <Svg s={17}><path d="M5 4.500h10.500V12H3V8M9 12v2.500M6 14.500h7M.5 1h4v4h-4zM2.500 5v3H5" /></Svg>,
    <Speaker s={17} />,
  ];
  const Chev = () => <ChevronsDown size={10} strokeWidth={3} />;
  return (
    <aside className="flex w-[90px] shrink-0 flex-col items-center bg-[linear-gradient(#20242c,#25242d_35%,#2a2935_55%,#2c363f_75%,#2c3a42)] text-[12px] text-[#e8e8ea]">
      <Btn label="Пуск Windows" className="h-10 w-full"><WinLogo s={16} /></Btn>
      <Btn label="Поиск Windows" className="h-10 w-full"><Glass /></Btn>
      <Btn label="Кортана" className="h-10 w-full"><span className="size-4 rounded-full border-2 border-white" /></Btn>
      <Btn label="Задачи" className="h-[43px] w-full pb-1"><TaskView /></Btn>
      {side.map((a) => <Btn key={a.n} label={a.n} className={`h-[47px] w-full ${a.c}`}>{a.i}</Btn>)}
      <div className="mt-[70px] flex w-full justify-center gap-2 pr-2.5">
        <Btn label="Epic Games Launcher" className="h-10 w-8 border-b border-[#5fa8c8] pb-2"><Epic s={30} /></Btn>
        <Btn label="Steam" className="h-10 w-8 border-b border-[#c9733e] pb-2"><span className="flex size-[30px] items-center justify-center rounded-full bg-[linear-gradient(#14224e,#1b73ad)]"><FaSteamSymbol size={26} /></span></Btn>
      </div>
      <div className="mt-3 flex flex-col items-center gap-1 leading-6">
        <Chev /><span>паша</span>
        <Chev /><span>МАМА</span>
        <Chev /><span>павел</span>
        <Chev />
      </div>
      <Btn label="Люди Windows" className="mt-[18px] h-6"><Svg s={16}><circle cx="5.500" cy="7.500" r="2.500" /><path d="M1 15q0-5 4.500-5T10 15" /><circle cx="11.500" cy="3" r="2.500" /><path d="M9.500 6.500q6-1.500 6 4.500" /></Svg></Btn>
      <div className="mt-2 mr-2 grid grid-cols-3">
        {dots.map((d, i) => <Btn key={i} label={`Значок ${i + 1}`} className="size-6">{d}</Btn>)}
      </div>
      <Btn label="Клавиатура" className="h-7"><svg width="23" height="12" viewBox="0 0 23 12" fill="none" stroke="currentColor" aria-hidden="true"><path d="M.5.5h22v11H.5z" /><path d="M3 3.500h17M3 6h17" strokeDasharray="1 1.500" /><path d="M5 8.500h13" /></svg></Btn>
      <span className="mt-2 text-[13px] leading-5">РУС</span>
      <time className="mt-[19px] text-center leading-[17px]">13:46<br />вторник<br />03.11.2020</time>
      <Btn label="Центр уведомлений" className="mt-[15px] h-6"><Svg s={17}><path d="M.5 1.500h15v11H10L8 14.500 6 12.500H.5z" /></Svg></Btn>
      <span className="mt-auto mb-1 h-px w-full bg-[#66747c]" />
    </aside>
  );
}

export default function App() {
  return (
    <div className="flex h-screen overflow-hidden font-['Open_Sans','Noto_Sans',sans-serif]">
      <div className="flex min-w-0 flex-1 flex-col">
        <TabStrip />
        <div className="bg-[#2b2b2b]"><header className="rounded-tr-lg bg-[#ba5cd9]"><AddressBar /><Bookmarks /></header></div>
        <div className="flex min-h-0 flex-1">
          <main className="flex min-w-0 flex-1 flex-col bg-black pt-[18px]">
            <WordTitle />
            <WordTabs />
            <Ribbon />
            <div className="relative flex h-[632px] flex-col">
              <div className="relative flex min-h-0 flex-1 justify-center overflow-hidden bg-[linear-gradient(90deg,#e8e6e8_50%,#e6e3eb_50%)] pr-[21px]">
                <Page />
                <svg width="12" height="18" viewBox="0 0 12 18" className="absolute left-[386px] top-[360px]" fill="#fff" stroke="#444" aria-hidden="true"><path d="M10.500 1v13l-3-3-2 5-2-1 2-4.500h-4z" /></svg>
              </div>
              <StatusBar />
              <ShareNotice />
            </div>
            <SharedTaskbar />
            <div className="h-[19px] shrink-0" />
            <Stage />
          </main>
          <People />
        </div>
      </div>
      <HostTaskbar />
    </div>
  );
}
